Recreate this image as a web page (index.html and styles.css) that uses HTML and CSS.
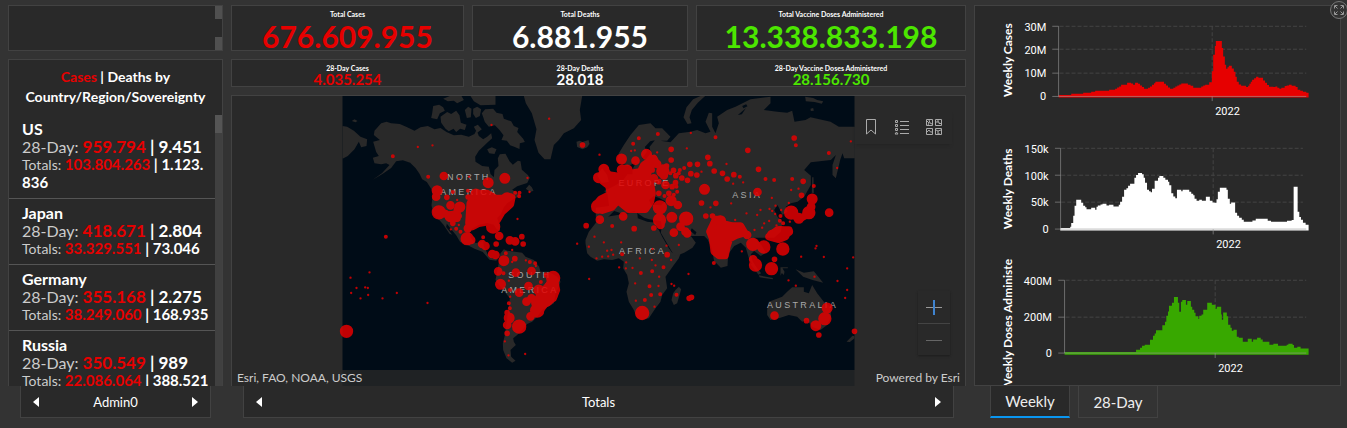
FILE: index.html
```html
<!DOCTYPE html>
<html lang="en">
<head>
<meta charset="utf-8">
<title>COVID-19 Dashboard</title>
<link rel="stylesheet" href="styles.css">
</head>
<body>
<main class="dashboard">
  <section class="column side">
    <div class="panel stub"><div class="scroll-arrows"><span></span><span></span></div></div>
    <div class="panel countries">
      <div class="list-area">
        <h2><span class="red">Cases</span> | Deaths by Country/Region/Sovereignty</h2>
        <div class="list-body">
          <ul>
            <li><h3>US</h3><p class="recent">28-Day: <b class="red">959.794</b> <b>| 9.451</b></p><p class="totals">Totals: <b class="red">103.804.263</b> <b>| 1.123.<wbr>836</b></p></li>
            <li><h3>Japan</h3><p class="recent">28-Day: <b class="red">418.671</b> <b>| 2.804</b></p><p class="totals">Totals: <b class="red">33.329.551</b> <b>| 73.046</b></p></li>
            <li><h3>Germany</h3><p class="recent">28-Day: <b class="red">355.168</b> <b>| 2.275</b></p><p class="totals">Totals: <b class="red">38.249.060</b> <b>| 168.935</b></p></li>
            <li><h3>Russia</h3><p class="recent">28-Day: <b class="red">350.549</b> <b>| 989</b></p><p class="totals">Totals: <b class="red">22.086.064</b> <b>| 388.521</b></p></li>
          </ul>
          <div class="scrollbar"><span></span></div>
        </div>
      </div>
    </div>
    <nav class="pager">
      <button aria-label="Previous list"><svg width="6" height="10" viewBox="0 0 6 10"><path d="M6 0v10L0 5z"/></svg></button>
      <span>Admin0</span>
      <button aria-label="Next list"><svg width="6" height="10" viewBox="0 0 6 10"><path d="M0 0v10l6-5z"/></svg></button>
    </nav>
  </section>

  <section class="column center">
    <div class="stats">
      <div class="panel stat"><h4>Total Cases</h4><p class="red">676.609.955</p></div>
      <div class="panel stat"><h4>Total Deaths</h4><p>6.881.955</p></div>
      <div class="panel stat"><h4>Total Vaccine Doses Administered</h4><p class="green">13.338.833.198</p></div>
    </div>
    <div class="stats small">
      <div class="panel stat"><h4>28-Day Cases</h4><p class="red">4.035.254</p></div>
      <div class="panel stat"><h4>28-Day Deaths</h4><p>28.018</p></div>
      <div class="panel stat"><h4>28-Day Vaccine Doses Administered</h4><p class="green">28.156.730</p></div>
    </div>
    <div class="panel map">
      <svg class="world" viewBox="6 18 1536 870" role="img" aria-label="World map of cases">
        <rect class="ocean" x="6" y="18" width="1536" height="870"/>
        <g class="land">
          <path d="M98 155l20-5-18-15 2-13 20-22 16-5 14 5 26 2 22 10 22 10 18-10 22-4 20 10 18-4 18 12 22 10 22-2 23 6 17-8 6-12 7 18 13 10 12-8 12-10 3 15-15 13-10 10-15 14-11 18 1 15 20 13 20 2 5 22 10 10 2-22 12-12-2-23 6-12 17-2 12 23 10 10 15-12 8 2 4 25 18 16 6 8-8 16-30 10-15 10 15 10 10 8-20 9-20 14-10 12-10 22-10 10 8 25v15l-10-7-8-13-20-5-25 5-20 12-7 12 3 17 15 15 22-8 2 18 6 10 5 12 12 12 20 2-6 6-20-3-20-23-25-10-20-10-23-10-12-20-15-18-13-17-2 10 18 23-8-3-18-27-12-13-18-15-6-30 4-35-5-15-13-20-14-8-8-17-12-17-16-16-22-7-20 3-15 20-25 17-30 18 28-20 22-24-10-5-15 3-20-3-5-17 18-5-8-12z"/>
          <path d="M6 108l14 2 20 12 20 18 20 8-2 20-16 4-7-17-13 23-12 12-8 8-16 8zM34 93l8-5 9 5-6 4zM550 18h175l-7 42 4 30-22 25-30 15-15 20-15 15-10 43h-18l-18-20-12-38 6-32-14-48-18-30zM708 155l10-3 8 4 18-6 3 12-7 10-14 6-16-7z"/>
          <path d="M275 70l3-22 18-4 12 8 5 10-15 8-8 18-18-4zM302 98l-2-18 20-14 12 6 15-10 10 14 4 22 17 6-5 16-14-4-12 10-8-10-14 8-10-8zM308 26l20-8h35l7 12-20 10-10-8-18 2zM373 60l10-10 10 6-2 26-12 2zM398 56l12-6 12 8-4 20-12 6-8-12zM390 18h75v26l-45 2-20-12zM424 70l10-12 24-2 10 12 18 4 4 14 22 8 8 14 14 6-4 12 18 20 5 10-15 4-1 17-16-7-12-4-10-14-16-2 6-14-12-16-14-14-18 4-12-14zM400 110l12-6 12 14-14 10zM440 178l14-6 14 6-6 14-16-2zM556 296l10-12 8 8 5 10-10 4z"/>
          <path d="M480 490l10-12 10 4 45 6 10 12 25 10 16 20 4 15h25l25 15 10 15-5 15-10 20-5 30-35 20-15 20-15 15-15 7-10 13-20 20-12 10 2 10 6 10-16 15 2 20 13 12-10 6-17-13-10-25-1-20 5-20 6-40 7-50 3-25-28-35-15-20 5-25z"/>
          <path d="M735 450l10-25 20-25 10-15 15-3 60-10 40-7 2 20 28 10 25 3 5 17 5 5 10 20 20 35 10 13 27-3-7 20-15 20-25 35 5 35-15 20-5 20-15 20-20 30-25 5-10-5-10-25-15-25-7-30 7-25-5-25-12-20 2-20-15-10-20 5-25-2-20 4-20-12-10-10-5-30zM1005 600l10-10 7 8-12 42-10 5-7-15 5-20z"/>
          <path d="M830 215l5-25 15-25 20-30 25-30 35-5 15 15h20l25 25-10 12-20 0 30 5 25-27 35-5 20-5 25 10 15-5-15-30 10-27 10 2v40l10 20 10-30-5-20 30-20 25-10 45-22 60-8v20l-20 20 40 5 30 3 15-6 7 33 33-5 15-8 60 13 25 15h48v95l-32 0-5-15-7 20-13 55-10-10v-30l10-30-15 15-60 7-20 23 20 17v28l-20 35-20 15-20 5-15 10 5 15-15 10-10-20-5-10-10 15 10 20 15 15-5 30-20 18-60 0 20 20 15 25-15 10-20-15-10 10 5 20 15 25-10-5-15-25-10-35-15-15-20 10-18 25-2 35-20 5-20-20-8-40-12-25-10-10h-40l15 20-10 15-25 15-25 10-10-10-15-25-20-35 3-20-3-15-35-5-15-5-30-20-30 10-30-10-25 25-30-5v-30l40-5-5-35-10-10 30-15 25-15 15-20h15v-15l10-20-25 10z"/>
          <path d="M1041 102l-12-20 9-30 20-24 22-10h14l-22 20-18 22-7 22 6 18zM1394 20l24 4 12 6 18 4-4 7-22-5-26-2zM1410 56l8-2 2 8-9 1zM1415 262l4 0 1 48-6-2zM770 255l15-20 15 20 5 20-22 4z"/>
          <path d="M1280 660l5-25 40-15 15-15 15-13h35v13l15 5 10-25 15 25 20 25 20 15 2 30-12 25-20 15-25-10-15-20-15 5-15-15-25-5-30 10-25 5-10-15zM1365 538l25 10 30-4 28 34-32-8-28-10zM1228 520l14 5 20 25-8 4zM1255 556l42 8v4l-40-6zM1320 532h22v3h-16l6 10-2 10-6-6-4 8zM1518 755l18-18 6 2v6l-14 11z"/>
        </g>
        <g class="water">
          <path d="M905 205l14-20-6-14 16-17 14-3-16 20 4 18-14 18zM925 330l15-12 16 6 18 10-12 12-30-2zM1054 415l14 12-4 8-14-12z"/>
          <path d="M1205 48l12-5 4 6-12 6zM1192 75l24-20-12 18z"/>
        </g>
        <g class="map-labels">
          <text x="385" y="271">NORTH</text><text x="385" y="315">AMERICA</text>
          <text x="568" y="564">SOUTH</text><text x="568" y="609">AMERICA</text>
          <text x="912" y="287">EUROPE</text><text x="1220" y="323">ASIA</text>
          <text x="906" y="493">AFRICA</text><text x="1386" y="653">AUSTRALIA</text>
        </g>
        <g class="cases">
          <path class="mass" d="M385 400l4-60 15-30h36l25 15 25 0 24-2-4 20-25 22-15 25-25 5-30 5-20 10zM790 235l15 20 35 5 20-8 40-7 10-20 15-10 15-10 5 10-20 20-5 25 10 20 5 30-5 25-15 23h-50l-15-12-18-15-17 20-30 10-20-15 15-18 30-15-5-25-25-20zM1115 410l10-22h14l12 14 25 6h24l12 20-25 8-20 10-8 25-5 26h-18l-15-12-5-40-8-20zM1285 440l25-20h35l-10 20-20 8zM640 560l8 40-10 25-25 18-20 25-10-28 20-30 22-25zM290 370h25l15 15h20v-25M1355 368l20 20 25-14"/>
          <path class="d44" d="M295 367h0M536 710h0M458 410h0M905 669h0M1037 386h0M958 352h0M1352 368h0M638 564h0M773 350h0M492 338h0M590 662h0M630 614h0"/>
          <path class="d40" d="M1237 463h0M1270 471h0M1327 477h0M1293 536h0M1245 525h0M1453 686h0M1405 368h0M957 390h0M967 243h0M380 446h0M18 724h0M500 327h0M618 630h0M1320 428h0M1145 410h0M632 590h0"/>
          <path class="d34" d="M290 302h0M493 265h0M443 278h0M480 583h0M490 512h0M1092 298h0M1426 707h0M1415 327h0M1460 654h0M843 207h0M918 193h0M790 238h0M774 263h0M994 382h0M358 351h0M506 684h0M329 380h0M845 240h0M1375 385h0M595 600h0M1296 435h0M992 332h0M1180 430h0M1140 392h0M406 312h0M860 240h0"/>
          <path class="d26" d="M330 346h0M287 320h0M455 492h0M425 462h0M476 438h0M473 544h0M570 679h0M558 635h0M564 588h0M573 543h0M1302 677h0M1000 428h0M1035 425h0M1020 410h0M778 389h0M848 379h0M1251 306h0M508 451h0M524 454h0M526 548h0M310 258h0M885 212h0M938 208h0M573 625h0M500 705h0M536 608h0M1012 345h0M1220 435h0M1466 368h0M382 415h0M1238 508h0M970 256h0M975 285h0M950 222h0M392 450h0M435 468h0M465 495h0M1040 430h0M960 405h0M940 265h0M1412 350h0M1345 425h0"/>
          <path class="d18" d="M319 322h0M337 400h0M523 506h0M1398 692h0M1048 223h0M1071 223h0M1102 202h0M1108 221h0M1121 243h0M1146 250h0M1160 267h0M1180 254h0M1254 238h0M1388 274h0M1383 316h0M1222 181h0M1361 144h0M1083 339h0M1126 340h0M1096 378h0M1116 378h0M881 416h0M980 494h0M500 730h0M737 407h0M1069 255h0M1024 264h0M1041 271h0M1006 257h0M992 178h0M992 210h0M1046 625h0M1053 622h0M726 165h0M1302 508h0M940 414h0M544 440h0M548 462h0M467 462h0M383 321h0M999 241h0M1051 251h0M356 378h0M1005 278h0M500 668h0M618 555h0M1435 735h0M1542 724h0M955 310h0M985 310h0M995 290h0M935 240h0M978 228h0M955 275h0"/>
          <path class="d13" d="M157 199h0M263 260h0M136 440h0M382 302h0M337 306h0M815 408h0M845 493h0M927 589h0M932 615h0M959 613h0M913 630h0M969 532h0M935 544h0M895 145h0M952 132h0M878 161h0M1125 142h0M1031 234h0M1198 260h0M1366 166h0M901 549h0M601 576h0M496 490h0M508 655h0M1008 614h0M1120 519h0M508 600h0M505 640h0M1275 267h0M1301 270h0M1355 267h0M1465 189h0M1420 288h0M347 416h0M360 425h0M489 550h0M428 442h0M584 520h0M568 516h0M537 308h0M524 308h0M536 319h0M512 316h0M1010 305h0M1000 314h0M1018 240h0M1015 250h0M990 250h0M1008 290h0M972 318h0M1328 400h0M1318 392h0M1320 378h0"/>
          <path class="d8" d="M453 105h0M626 86h0M232 171h0M276 166h0M561 264h0M567 306h0M531 387h0M710 461h0M746 567h0M87 547h0M30 563h0M48 594h0M74 592h0M82 594h0M32 609h0M60 625h0M83 615h0M126 625h0M169 609h0M261 639h0M554 792h0M504 796h0M493 754h0M386 260h0M355 266h0M350 330h0M355 405h0M331 418h0M777 194h0M950 187h0M1051 129h0M1039 175h0M883 181h0M872 183h0M1464 189h0M1490 234h0M1531 154h0M1083 245h0M1158 222h0M1178 281h0M1208 277h0M1172 340h0M1110 352h0M1218 370h0M1250 375h0M1260 360h0M1287 357h0M1305 347h0M1304 372h0M1295 363h0M1345 339h0M1348 395h0M1286 393h0M1308 406h0M1265 413h0M1242 420h0M1271 400h0M1322 360h0M1294 324h0M1352 300h0M1374 296h0M1184 390h0M1204 484h0M1382 500h0M1425 475h0M1428 468h0M1450 501h0M1520 535h0M1491 573h0M1520 600h0M1514 624h0M1366 587h0M1344 571h0M1422 560h0M1538 502h0M762 440h0M745 470h0M790 457h0M800 482h0M768 505h0M785 500h0M803 499h0M818 494h0M857 517h0M856 535h0M876 534h0M898 505h0M884 580h0M886 632h0M942 650h0M954 588h0M945 526h0M956 560h0M1044 552h0M993 582h0M1001 587h0M978 467h0M936 477h0M1015 465h0M992 510h0M842 457h0M813 480h0M934 510h0M836 532h0M556 511h0M586 528h0M515 516h0M505 572h0M509 620h0M515 480h0"/>
        </g>
      </svg>
      <div class="map-tools">
        <button aria-label="Bookmarks"><svg width="16" height="18" viewBox="0 0 16 18"><path d="M3.500 1.500h9v14.500l-4.500-4-4.500 4z"/></svg></button>
        <button aria-label="Legend"><svg width="16" height="18" viewBox="0 0 16 18"><path d="M6 3.500h9M6 7.500h9M6 11.500h9M6 15.500h9M1.500 2.500h2v2h-2zM1.500 6.500h2v2h-2zM1.500 10.500h2v2h-2zM1 16h3l-1.500-2z"/></svg></button>
        <button aria-label="Basemap gallery"><svg width="18" height="18" viewBox="0 0 18 18"><path d="M1.500 1.500h6v6h-6zM10.500 1.500h6v6h-6zM1.500 10.500h6v6h-6zM10.500 10.500h6v6h-6zM2 3l2 2-1 2M4 2l1 3 2 1M11 4h3v1.500h2M13 2v2M2 14l2-2 1.500 2H7M11 12l2 1 3-1M13 13v3h2"/></svg></button>
      </div>
      <div class="zoom">
        <button aria-label="Zoom in"><svg width="16" height="16" viewBox="0 0 16 16"><path d="M0 8.500h16"/><path class="blue" d="M8 1v15"/></svg></button>
        <button aria-label="Zoom out"><svg width="16" height="16" viewBox="0 0 16 16"><path d="M0 8.500h16"/></svg></button>
      </div>
      <div class="attribution"><span>Esri, FAO, NOAA, USGS</span><span>Powered by Esri</span></div>
    </div>
    <nav class="pager">
      <button aria-label="Previous map"><svg width="6" height="10" viewBox="0 0 6 10"><path d="M6 0v10L0 5z"/></svg></button>
      <span>Totals</span>
      <button aria-label="Next map"><svg width="6" height="10" viewBox="0 0 6 10"><path d="M0 0v10l6-5z"/></svg></button>
    </nav>
  </section>

  <section class="column right">
    <div class="panel charts">
      <svg class="chart first" viewBox="15 18 1095 372" role="img" aria-label="Weekly Cases">
        <path class="grid" d="M268 79H1010M268 148H1010M268 220H1010M727 79V290"/>
        <path class="bars-red" d="M265 293V286H303V282H339V279H363V276H375V273H417V270H435V267H441V263H447V260H453V255H471V249H483V251H489V255H495V249H504V252H510V257H516V262H522V267H534V264H540V260H546V255H552V250H556V246H582V252H588V257H594V263H600V267H610V264H616V260H622V257H628V254H634V251H654V255H662V258H670V264H694V260H700V257H706V255H718V247H726V214H730V165H735V138H738V123H756V144H760V170H765V195H769V207H773V202H777V198H786V206H792V216H797V231H801V246H807V254H814V258H829V262H835V258H839V252H843V246H847V240H853V235H859V231H866V234H880V242H886V249H892V256H898V261H911V262H917V260H923V264H929V267H935V264H945V259H951V257H958V255H966V258H978V262H984V270H992V273H1000V276H1010V279H1017V293Z"/>
        <path class="axis" d="M246 79H265V290M246 148H265M246 220H265M246 290H1010M727 290V304"/>
        <text class="end" x="228" y="93">30M</text><text class="end" x="228" y="161">20M</text><text class="end" x="228" y="233">10M</text><text class="end" x="228" y="302">0</text>
        <text x="736" y="345">2022</text>
        <text class="title" transform="translate(126 181) rotate(-90)">Weekly Cases</text>
      </svg>
      <svg class="chart second" viewBox="15 0 1095 375" role="img" aria-label="Weekly Deaths">
        <path class="grid" d="M273 55H1000M273 136H1000M273 217H1000M730 55V298"/>
        <path class="bars-white" d="M270 302V295H300V291H303V280H309V258H313V228H318V210H333V219H339V228H345V232H349V238H363V234H375V240H379V231H383V227H391V224H397V222H409V227H417V225H430V230H446V225H450V216H456V201H462V180H469V175H474V168H480V162H493V144H498V135H504V129H516V133H521V144H525V159H531V180H537V184H542V187H546V177H554V153H564V144H568V138H580V144H586V150H594V156H598V166H604V190H610V200H616V205H621V180H634V184H638V180H658V186H664V192H670V196H674V207H680V213H688V210H696V213H708V201H720V213H728V218H734V219H740V208H744V186H750V174H770V180H774V207H780V222H784V218H796V249H802V258H808V264H816V270H822V276H848V272H858V267H894V273H904V276H952V273H966V271H972V171H984V246H989V262H994V270H1000V279H1008V285H1017V302Z"/>
        <path class="axis" d="M254 55H271V298M254 136H271M254 217H271M254 298H1010M730 298V314"/>
        <text class="end" x="235" y="69">150k</text><text class="end" x="235" y="150">100k</text><text class="end" x="235" y="230">50k</text><text class="end" x="235" y="311">0</text>
        <text x="739" y="354">2022</text>
        <text class="title" transform="translate(126 177) rotate(-90)">Weekly Deaths</text>
      </svg>
      <svg class="chart third" viewBox="15 15 1095 393" role="img" aria-label="Weekly Doses Administered">
        <path class="grid" d="M286 94H1010M286 205H1010M736 94V313"/>
        <path class="bars-green" d="M283 318V310H498V303H510V297H516V291H524V288H540V273H549V261H554V254H558V244H577V229H585V219H589V201H594V188H597V171H606V162H612V144H624V162H628V189H633V159H637V153H648V168H652V156H663V174H667V183H673V192H677V202H685V210H688V201H695V197H700V183H712V162H726V168H737V180H741V174H754V197H756V213H760V191H771V202H775V228H782V237H786V246H791V243H801V264H807V267H819V279H834V270H846V279H850V272H862V267H873V272H879V279H899V288H911V285H925V291H951V288H956V285H969V289H973V297H983V294H993V299H1017V318Z"/>
        <path class="axis" d="M264 94H283V313M264 205H283M264 313H1010M736 313V328"/>
        <text class="end" x="245" y="108">400M</text><text class="end" x="245" y="218">200M</text><text class="end" x="245" y="326">0</text>
        <text x="745" y="369">2022</text>
        <text class="title end" transform="translate(126 30) rotate(-90)">Weekly Doses Administe</text>
      </svg>
      <button class="expand" aria-label="Expand"><svg width="20" height="20" viewBox="0 0 20 20"><circle cx="10" cy="10" r="8.500"/><path d="M5.500 8.500v-3h3M6 6l2.500 2.500M11.500 5.500h3v3M14 6l-2.500 2.500M5.500 11.500v3h3M6 14l2.500-2.500M11.500 14.500h3v-3M14 14l-2.500-2.500"/></svg></button>
    </div>
    <nav class="tabs"><button class="active">Weekly</button><button>28-Day</button></nav>
  </section>
</main>
</body>
</html>
```
FILE: styles.css
```css
* { box-sizing: border-box; }
body { margin: 0; background: #333; color: #fff; font-family: Lato, "Open Sans", sans-serif; }
h2, h3, h4, p, ul { margin: 0; padding: 0; }
ul { list-style: none; }
button { margin: 0; padding: 0; border: 0; background: none; color: inherit; font: inherit; display: flex; align-items: center; justify-content: center; cursor: pointer; }
svg { display: block; fill: none; }
.red { color: #e60000; }
.green { color: #4ce600; }

.dashboard { display: grid; grid-template-columns: 215fr 735fr 367fr; gap: 8px; height: 100vh; min-height: 428px; padding: 5px 6px 10px 8px; }
.column { display: flex; flex-direction: column; min-width: 0; min-height: 0; }
.panel { background: #292929; border: 1px solid #424242; min-width: 0; }

.stub { height: 46px; margin-bottom: 8px; display: flex; justify-content: flex-end; }
.scroll-arrows { width: 7px; display: flex; flex-direction: column; justify-content: space-between; }
.scroll-arrows span { height: 13px; background: #505050; }
.countries { flex: 1; min-height: 0; border-bottom: 0; }
.list-area { height: 100%; display: flex; flex-direction: column; }
.list-area h2 { padding: 7px 12px 8px; font-size: 14px; line-height: 20px; font-weight: 700; text-align: center; }
.list-body { flex: 1; min-height: 0; display: flex; overflow: hidden; }
.list-body ul { flex: 1; min-width: 0; }
.list-body li { padding: 5px 0 6px 13px; border-bottom: 1px solid #555; }
.list-body h3 { font-size: 16px; font-weight: 700; line-height: 18px; }
.list-body b { color: #fff; font-weight: 700; }
.list-body b.red { color: #e60000; }
.recent { font-size: 16px; line-height: 18px; color: #ccc; white-space: nowrap; }
.totals { font-size: 14px; line-height: 18px; color: #ccc; }
.recent b { font-size: 17px; line-height: 17px; }
.totals b { font-size: 15px; line-height: 17px; }
.scrollbar { width: 7px; background: #404040; }
.scrollbar span { display: block; height: 18px; background: #555; }

.pager { height: 32px; margin: 0 12px; padding: 0 12px; background: #292929; border: 1px solid #424242; border-top: 0; display: flex; align-items: center; justify-content: space-between; font-size: 13px; }
.pager button { width: 6px; height: 20px; }
.pager path { fill: #fff; }

.stats { display: grid; grid-template-columns: 233fr 216fr 270fr; gap: 8px; margin-bottom: 8px; }
.stat { height: 46px; text-align: center; overflow: hidden; padding-top: 4px; }
.stat h4 { font-size: 7px; line-height: 9px; font-weight: 700; }
.stat p { font-size: 30px; line-height: 34px; font-weight: 700; }
.small .stat { height: 28px; }
.small h4 { line-height: 8px; }
.small p { font-size: 15px; line-height: 14px; }

.map { flex: 1; min-height: 0; position: relative; border-bottom: 0; }
.world { width: 100%; height: 100%; }
.ocean, .water { fill: #000c17; }
.land { fill: #292929; }
.map-labels { fill: #aaa; font: 27px "Liberation Sans", Arial, sans-serif; letter-spacing: 7px; text-anchor: middle; }
.cases { opacity: .84; stroke: #e60000; stroke-linecap: round; stroke-linejoin: round; }
.mass { fill: #e60000; stroke-width: 22; }
.d44 { stroke-width: 43; }
.d40 { stroke-width: 40; }
.d34 { stroke-width: 33; }
.d26 { stroke-width: 26; }
.d18 { stroke-width: 17; }
.d13 { stroke-width: 12; }
.d8 { stroke-width: 7; }
.map-tools { position: absolute; top: 14px; right: 13px; display: flex; gap: 15px; padding: 8px 9px; box-shadow: 0 3px 3px -2px #222; }
.map-tools svg { stroke: #aaa; stroke-width: 1; }
.zoom { position: absolute; right: 15px; bottom: 31px; width: 32px; box-shadow: 0 1px 2px #1c1c1c; }
.zoom button { width: 32px; height: 32px; }
.zoom button + button { border-top: 1px solid #444; }
.zoom svg { stroke: #999; }
.zoom .blue { stroke: #3f83cf; stroke-width: 2; }
.zoom button + button svg { stroke: #666; }
.attribution { position: absolute; left: 0; right: 0; bottom: 0; height: 16px; padding: 0 5px; display: flex; justify-content: space-between; background: rgba(42, 42, 42, .75); color: #ccc; font-size: 12px; line-height: 16px; }

.charts { flex: 1; min-height: 0; display: flex; flex-direction: column; position: relative; }
.chart { width: 100%; min-height: 0; font: 33px Roboto, sans-serif; }
.first { flex: 124 1 0; }
.second { flex: 125 1 0; }
.third { flex: 131 1 0; }
.chart text { fill: #fff; }
.chart .title { font: 700 36px Lato, sans-serif; text-anchor: middle; }
.chart .end { text-anchor: end; }
.grid { stroke: #444; stroke-width: 3; stroke-dasharray: 12 6; }
.axis { stroke: #999; stroke-opacity: .6; stroke-width: 3; }
.bars-red { fill: #e60000; }
.bars-white { fill: #fff; }
.bars-green { fill: #38a800; }
.expand { position: absolute; top: -6px; right: -9px; }
.expand circle { stroke: #777; fill: #333; stroke-width: 1; }
.expand path { stroke: #999; }

.tabs { display: flex; gap: 8px; padding-left: 16px; height: 32px; }
.tabs button { width: 80px; border: 1px solid #424242; border-top: 0; color: #eee; font-size: 15px; }
.tabs .active { background: #292929; border-bottom: 2px solid #0a96f0; margin-top: -1px; }
```
